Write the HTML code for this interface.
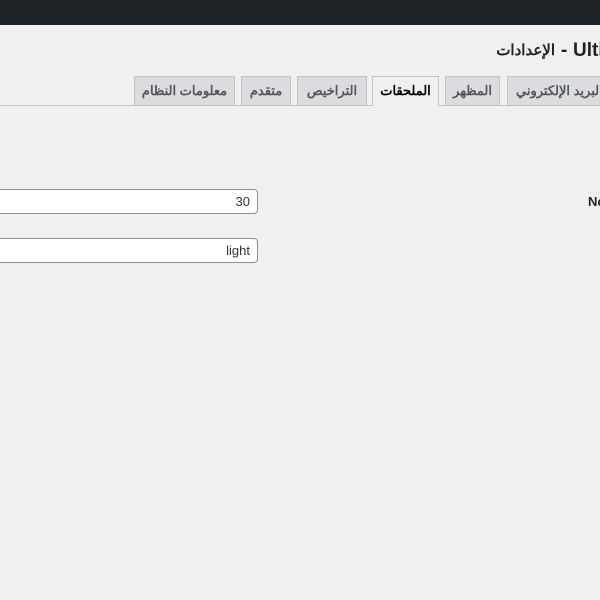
<!DOCTYPE html>
<html><head><meta charset="utf-8"><style>
body{margin:0;width:600px;height:600px;background:#f0f0f1;overflow:hidden;position:relative;font-family:"Liberation Sans","Noto Sans CJK SC",sans-serif;color:#1d2327}
.bar{position:absolute;left:0;top:0;width:600px;height:25px;background:#1d2327}
.t{position:absolute;white-space:nowrap}
.tab{position:absolute;top:76px;height:29px;box-sizing:border-box;border:1px solid #c3c4c7;border-bottom:none;background:#dcdcde;font-size:13px;font-weight:600;color:#50575e;text-align:center;line-height:28px;white-space:nowrap;overflow:hidden;direction:rtl}
.act{background:#f0f0f1;color:#000;height:30px;z-index:2}
.line{position:absolute;left:0;top:105px;width:600px;height:1px;background:#c3c4c7}
.in{position:absolute;left:-10px;width:268px;height:25px;box-sizing:border-box;border:1px solid #8c8f94;border-radius:4px;background:#fff;font-size:13px;text-align:right;padding-right:7px;line-height:23px;color:#2c3338}
</style></head><body>
<div class="bar"></div>
<div class="t" style="left:499px;top:41px;width:56px;font-size:15px;font-weight:600;direction:rtl;text-align:center">الإعدادات</div>
<div class="t" style="left:561px;top:40px;font-size:19px;font-weight:700">-</div>
<div class="t" style="left:573px;top:40px;font-size:19px;font-weight:700">Ulti</div>
<div class="tab" style="left:134px;width:101px">معلومات النظام</div>
<div class="tab" style="left:241px;width:50px">متقدم</div>
<div class="tab" style="left:297px;width:70px">التراخيص</div>
<div class="tab act" style="left:372px;width:67px">الملحقات</div>
<div class="tab" style="left:445px;width:55px">المظهر</div>
<div class="tab" style="left:507px;width:110px;text-align:left;padding-left:8px">البريد الإلكتروني</div>
<div class="line"></div>
<div class="in" style="top:189px">30</div>
<div class="in" style="top:238px">light</div>
<div class="t" style="left:588px;top:194px;font-size:13px;font-weight:700">No</div>
</body></html>
